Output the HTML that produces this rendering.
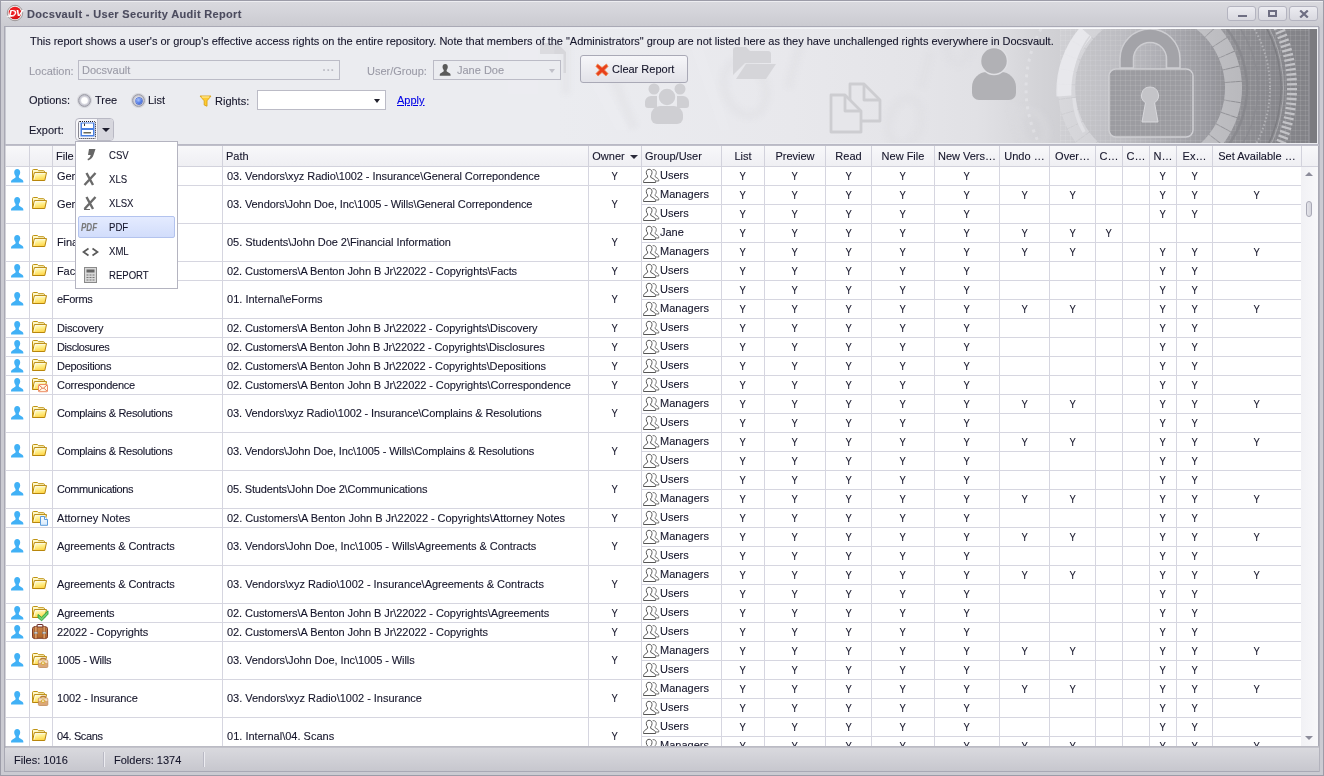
<!DOCTYPE html>
<html lang="en"><head><meta charset="utf-8"><title>Docsvault - User Security Audit Report</title>
<style>
html,body{margin:0;padding:0}
body{width:1324px;height:776px;overflow:hidden;position:relative;background:#d3d3da;font-family:"Liberation Sans",sans-serif;font-size:11px;color:#15152a;-webkit-font-smoothing:antialiased;-webkit-text-stroke-width:0.1px}
div,span,i,a{box-sizing:border-box}
.abs{position:absolute}
#win{position:absolute;left:0;top:0;width:1324px;height:776px;border:1px solid #9c9ca8;background:linear-gradient(#ededf1 0,#ededf1 1px,#d9d9de 1.5px,#d3d3d9 12px,#cbcbd1 25px,#cbcbd2 26px)}
#title{will-change:transform;position:absolute;left:27px;top:8px;font-weight:bold;font-size:11px;color:#4b4b5e;letter-spacing:0.32px;white-space:nowrap;line-height:13px}
.wb{position:absolute;top:6px;width:29px;height:15px;border:1px solid #b4b4c0;border-radius:3px;background:linear-gradient(#ececf1,#d9d9e0)}
#client{position:absolute;left:4px;top:26px;width:1315px;height:746px;border:1px solid #a9a9b4;border-top:2px solid #a9a9b5;background:#ebecf0}
#panel{position:absolute;left:5px;top:27px;width:1313px;height:117px;background:#ebecf0;overflow:hidden}
#grid{position:absolute;left:5px;top:146px;width:1313px;height:600px;background:#fff;overflow:hidden}
.hc{position:absolute;top:0;height:20px;line-height:20px;background:linear-gradient(#f8f8fa,#efeff3);border-right:1px solid #d2d2dc;border-bottom:1px solid #d2d2dc;text-align:center;white-space:nowrap;overflow:hidden;box-sizing:content-box}
.hc.l{text-align:left;padding-left:3px;box-sizing:content-box}
.c{position:absolute;border-right:1px solid #d6d6e0;border-bottom:1px solid #d6d6e0;box-sizing:content-box;white-space:nowrap;overflow:hidden}
.c.ctr{text-align:center}
.c.ctr span{display:inline-block;transform:scaleX(0.86)}
.c.l{padding-left:4px;letter-spacing:-0.1px}
.c.g{padding-left:18px;letter-spacing:0}
.c.g span{position:relative;top:-1px}
.ic{width:18px;height:16px;position:absolute;overflow:visible}
.sortarr{display:inline-block;width:0;height:0;border-left:4px solid transparent;border-right:4px solid transparent;border-top:4px solid #2a2a3a;margin-left:5px;vertical-align:middle}
.dis{color:#9a9aa6}
.inp{border:1px solid #bbbbc6;background:#ebecf0}
.btn{border:1px solid #a9a9b6;border-radius:3px;background:linear-gradient(#f6f6f9,#e2e2e8)}
.radio{width:13px;height:13px;border-radius:50%;border:1px solid #9a9aa4;background:radial-gradient(circle closest-side at 50% 50%,#fff 0,#fff 52%,#d6d6de 72%,#bcbcc6 100%);box-shadow:0 0 0 1px rgba(196,196,204,0.55)}
.radio.on::after{content:"";position:absolute;left:2.500px;top:2.500px;width:6px;height:6px;border-radius:50%;background:radial-gradient(circle at 40% 35%,#a9c4ff,#3f6be0 70%,#2c52c4);box-shadow:0 0 0 0.700px #3a5fc8}
.sep{top:4px;width:2px;height:15px;border-left:1px solid #b9b9c4;border-right:1px solid #ececf1}
.mi{position:absolute;left:1px;width:100px;height:24px;line-height:24px;white-space:nowrap}
.mi b{position:absolute;left:32px;top:0;font-weight:normal;transform:scaleX(0.87);transform-origin:left}
.mi em{position:absolute;left:4px;top:0;font-size:11.500px;font-weight:bold;font-style:italic;color:#777;letter-spacing:0;transform:scaleX(0.70);transform-origin:left}
</style></head><body>
<svg width="0" height="0" style="position:absolute">
<defs>
<linearGradient id="gf" x1="0" y1="0" x2="0.300" y2="1"><stop offset="0" stop-color="#fffce0"/><stop offset="0.450" stop-color="#fff39a"/><stop offset="1" stop-color="#ffd84e"/></linearGradient>
<linearGradient id="gb" x1="0" y1="0" x2="0" y2="1"><stop offset="0" stop-color="#fffbd2"/><stop offset="1" stop-color="#ffe98a"/></linearGradient>
<linearGradient id="gbr" x1="0" y1="0" x2="0" y2="1"><stop offset="0" stop-color="#c98448"/><stop offset="1" stop-color="#b06428"/></linearGradient>
<linearGradient id="gdoc" x1="0" y1="0" x2="0" y2="1"><stop offset="0" stop-color="#f8fcff"/><stop offset="1" stop-color="#d6e9fb"/></linearGradient>
<g id="fold"><path d="M1.500 12.500V2.600Q1.500 1.500 2.600 1.500H6.400L7.600 2.700H12.400Q13.500 2.700 13.500 3.800V4.600" fill="url(#gb)" stroke="#bf9312" stroke-width="1"/><path d="M1.600 12.500L3.400 4.600H15.500L13.800 12.500Z" fill="url(#gf)" stroke="#b8860b" stroke-width="1" stroke-linejoin="round"/><path d="M3 11.500L4.300 5.600H14.300" fill="none" stroke="#fff" stroke-width="0.800" opacity="0.850"/></g>
<symbol id="i-user" viewBox="0 0 16 16"><path d="M8.200 1C10.100 1 11.200 2.400 11.200 4.300C11.200 5.700 10.700 7 9.900 7.900C9.700 8.600 9.800 9.300 10.100 9.800L13.300 11.800C14.100 12.300 14.400 13 14.400 14.600H2C2 13 2.300 12.300 3.100 11.800L6.300 9.800C6.600 9.300 6.700 8.600 6.500 7.900C5.700 7 5.200 5.700 5.200 4.300C5.200 2.400 6.300 1 8.200 1Z" fill="#41b1f6"/></symbol>
<symbol id="i-userg" viewBox="0 0 16 16"><path d="M8.200 1C10.100 1 11.200 2.400 11.200 4.300C11.200 5.700 10.700 7 9.900 7.900C9.700 8.600 9.800 9.300 10.100 9.800L13.300 11.800C14.100 12.300 14.400 13 14.400 14.600H2C2 13 2.300 12.300 3.100 11.800L6.300 9.800C6.600 9.300 6.700 8.600 6.500 7.900C5.700 7 5.200 5.700 5.200 4.300C5.200 2.400 6.300 1 8.200 1Z" fill="#5a5a5a"/></symbol>
<symbol id="i-f" viewBox="0 0 18 16" overflow="visible"><use href="#fold"/></symbol>
<symbol id="i-fm" viewBox="0 0 18 16" overflow="visible"><use href="#fold"/><rect x="7.500" y="7.500" width="9" height="7.200" rx="0.800" fill="#fff8e6" stroke="#ee8a62" stroke-width="1"/><path d="M8 8l4 3.600L16 8M8 14.200l3-3M16 14.200l-3-3" fill="none" stroke="#e0683c" stroke-width="0.900"/></symbol>
<symbol id="i-fd" viewBox="0 0 18 16" overflow="visible"><use href="#fold"/><path d="M9.500 6.500H13.500L16.500 9.500V15.300H9.500Z" fill="url(#gdoc)" stroke="#5b9bdc" stroke-width="1" stroke-linejoin="round"/><path d="M13.500 6.500V9.500H16.500" fill="#fff" stroke="#5b9bdc" stroke-width="1" stroke-linejoin="round"/></symbol>
<symbol id="i-fc" viewBox="0 0 18 16" overflow="visible"><use href="#fold"/><path d="M7 9.500L10.500 12.200L17 5.800V9.200L10.700 15.800L7 12.700Z" fill="#6fd070" stroke="#2aa03a" stroke-width="0.900" stroke-linejoin="round"/></symbol>
<symbol id="i-fb" viewBox="0 0 18 16" overflow="visible"><use href="#fold"/><path d="M9.800 8.300V7.300Q9.800 6.300 10.800 6.300H13.400Q14.400 6.300 14.400 7.300V8.300" fill="none" stroke="#b87840" stroke-width="1.300"/><rect x="7.400" y="8" width="9.400" height="7.500" rx="1" fill="#dba878" stroke="#c08a58" stroke-width="0.800"/><rect x="7.800" y="8.400" width="8.600" height="2.600" fill="#f4dcc4"/><rect x="10.400" y="10" width="3.400" height="2.200" rx="0.800" fill="#fff" stroke="#d4a010" stroke-width="1"/></symbol>
<symbol id="i-b" viewBox="0 0 18 16" overflow="visible"><path d="M6 3V1.800Q6 0.500 7.300 0.500H10.700Q12 0.500 12 1.800V3" fill="none" stroke="#6e2c2c" stroke-width="1.200"/><rect x="1.500" y="3" width="15" height="11.300" rx="1.500" fill="url(#gbr)" stroke="#7a3a2a" stroke-width="1"/><rect x="3.500" y="2.600" width="2.600" height="12.200" fill="#d99a60" stroke="#8a4a30" stroke-width="0.600"/><rect x="12" y="2.600" width="2.600" height="12.200" fill="#d99a60" stroke="#8a4a30" stroke-width="0.600"/><rect x="3.200" y="8" width="3.200" height="1.800" fill="#e8e8e8" stroke="#777" stroke-width="0.500"/><rect x="11.700" y="8" width="3.200" height="1.800" fill="#e8e8e8" stroke="#777" stroke-width="0.500"/></symbol>
<symbol id="i-group" viewBox="0 0 16 16" overflow="visible"><path d="M9.600 1.700C11.900 1.200 13.300 2.600 13.300 4.600C13.300 6 12.800 7 12.200 7.600V8.800L15 10.600C15.600 11 15.800 11.800 15.800 13H12.600" fill="#fff" stroke="#666" stroke-width="0.900"/><path d="M6.100 1.300C8 1.300 9 2.700 9 4.500C9 5.900 8.500 7.100 7.700 7.900V9.300L11.300 11.400C12.200 12 12.600 12.800 12.600 14.500H0.500C0.500 12.800 0.900 12 1.800 11.400L4.600 9.300V7.900C3.800 7.100 3.300 5.900 3.300 4.500C3.300 2.700 4.200 1.300 6.100 1.300Z" fill="#fff" stroke="#555" stroke-width="1"/></symbol>
</defs></svg>
<div id="win"></div>

<svg class="abs" style="left:6px;top:4px;overflow:visible;will-change:transform" width="18" height="18" viewBox="0 0 18 18"><defs><radialGradient id="dvg" cx="0.450" cy="0.350" r="0.750"><stop offset="0" stop-color="#f5262a"/><stop offset="0.700" stop-color="#e0161a"/><stop offset="1" stop-color="#b80e12"/></radialGradient></defs><circle cx="9" cy="9" r="7.700" fill="#f2f0f0" stroke="#8c8484" stroke-width="0.800"/><circle cx="9" cy="9" r="6.300" fill="url(#dvg)"/><text transform="translate(9.400 12) scale(1.200 1)" x="0" y="0" text-anchor="middle" font-family="Liberation Sans, sans-serif" font-size="9" font-weight="bold" font-style="italic" fill="#fff" letter-spacing="-0.800" style="-webkit-text-stroke-width:0">DV</text><path d="M0.800 12.200C3.500 12.600 6.500 12.400 8.500 11.600" stroke="#fff" stroke-width="1" fill="none"/></svg>
<div id="title">Docsvault - User Security Audit Report</div>
<div class="wb" style="left:1227px"><i class="abs" style="left:10px;top:8px;width:9px;height:2px;background:#6e6e82"></i></div>
<div class="wb" style="left:1258px"><i class="abs" style="left:9px;top:3px;width:9px;height:7px;border:2px solid #6e6e82"></i></div>
<div class="wb" style="left:1289px"><svg class="abs" style="left:9px;top:3px" width="10" height="8" viewBox="0 0 10 8"><path d="M1.200 0.500L8.800 7.500M8.800 0.500L1.200 7.500" stroke="#6e6e82" stroke-width="2.200"/></svg></div>
<div id="client"></div>
<div id="panel">
<svg class="abs" style="left:0;top:0" width="1313" height="117" viewBox="5 27 1313 117">
<defs>
<linearGradient id="bg1" x1="5" y1="0" x2="1317" y2="0" gradientUnits="userSpaceOnUse"><stop offset="0" stop-color="#ebecf0"/><stop offset="0.420" stop-color="#ebecf0"/><stop offset="0.600" stop-color="#e8e8ec"/><stop offset="0.700" stop-color="#e4e4e8"/><stop offset="0.740" stop-color="#e1e1e5"/><stop offset="0.765" stop-color="#dbdbdf"/><stop offset="0.785" stop-color="#d4d4d8"/><stop offset="0.815" stop-color="#cdcdd1"/><stop offset="0.850" stop-color="#c4c4c8"/><stop offset="0.880" stop-color="#b4b4b9"/><stop offset="0.910" stop-color="#a2a2a7"/><stop offset="0.940" stop-color="#8f8f94"/><stop offset="0.970" stop-color="#87878c"/><stop offset="1" stop-color="#818186"/></linearGradient>
<pattern id="gridp" width="5" height="5" patternUnits="userSpaceOnUse"><path d="M0 0.500h5M0.500 0v5" stroke="#fff" stroke-opacity="0.090" stroke-width="1"/></pattern>
<clipPath id="bclip"><rect x="5" y="29" width="1312" height="114"/></clipPath>
<linearGradient id="ringl" x1="1058" y1="0" x2="1242" y2="0" gradientUnits="userSpaceOnUse"><stop offset="0" stop-color="#d8d8dc"/><stop offset="0.250" stop-color="#d2d2d6"/><stop offset="0.600" stop-color="#c6c6ca"/><stop offset="1" stop-color="#b9b9bd"/></linearGradient><linearGradient id="mgl" x1="1000" y1="0" x2="1110" y2="0" gradientUnits="userSpaceOnUse"><stop offset="0" stop-color="#fff"/><stop offset="1" stop-color="#000"/></linearGradient><mask id="lmask" maskUnits="userSpaceOnUse" x="5" y="27" width="1313" height="117"><rect x="5" y="27" width="1313" height="117" fill="url(#mgl)"/></mask>
<linearGradient id="mg" x1="1110" y1="0" x2="1240" y2="0" gradientUnits="userSpaceOnUse"><stop offset="0" stop-color="#000"/><stop offset="1" stop-color="#fff"/></linearGradient><mask id="rmask" maskUnits="userSpaceOnUse" x="5" y="27" width="1313" height="117"><rect x="5" y="27" width="1313" height="117" fill="url(#mg)"/></mask>
<filter id="blur1" x="-10%" y="-10%" width="120%" height="120%"><feGaussianBlur stdDeviation="2.500"/></filter>
<linearGradient id="wl" x1="500" y1="0" x2="1100" y2="0" gradientUnits="userSpaceOnUse"><stop offset="0" stop-color="#ebecf0"/><stop offset="1" stop-color="#fafafc"/></linearGradient>
</defs>
<rect x="5" y="27" width="1313" height="117" fill="#ebecf0"/>
<rect x="5" y="28" width="1313" height="1" fill="url(#wl)"/>
<g clip-path="url(#bclip)">
<rect x="5" y="29" width="1312" height="114" fill="url(#bg1)"/>
<!-- faint texture -->
<g fill="none" stroke="#dcdce0" stroke-width="9" opacity="0.320" filter="url(#blur1)">
<ellipse cx="745" cy="88" rx="20" ry="28" transform="rotate(-20 745 88)"/>
<ellipse cx="905" cy="122" rx="16" ry="24" transform="rotate(15 905 122)"/>
<path d="M800 44l-12 44M930 52l-9 36M1012 104l10 36M608 64l26 64M566 44v50"/>
<ellipse cx="1032" cy="128" rx="13" ry="19" transform="rotate(-25 1032 128)"/>
<ellipse cx="958" cy="47" rx="11" ry="16"/>
</g>
<g fill="#d7d7db"><path d="M540 43h17l9 9v21h-2.500V54h-9V45.500H540z"/><rect x="540" y="43" width="15" height="11" opacity="0.800"/></g>
<g fill="#f3f3f6" opacity="0.150"><path d="M508 44h30v50h-30zM590 60l40 70h-14l-38-70zM700 40l30 90h-10l-32-90z"/></g>
<!-- grid overlay on right -->
<rect x="1060" y="29" width="257" height="114" fill="url(#gridp)"/>
<!-- outer rings --><g mask="url(#rmask)">
<circle cx="1150" cy="88" r="142" fill="none" stroke="#c2c2c6" stroke-width="10" stroke-dasharray="2.300 2.600"/>
<circle cx="1150" cy="88" r="131" fill="none" stroke="#7d7d82" stroke-width="1.500"/>
<circle cx="1150" cy="88" r="133.500" fill="none" stroke="#aaaaae" stroke-width="1"/>
<circle cx="1150" cy="88" r="120" fill="none" stroke="#b0b0b4" stroke-width="2" stroke-dasharray="1.500 2.200"/>
<circle cx="1150" cy="88" r="108" fill="none" stroke="#89898e" stroke-width="1.500" opacity="0.700"/>
<circle cx="1150" cy="88" r="97" fill="none" stroke="#86868b" stroke-width="2.500" opacity="0.800"/>
</g><g mask="url(#lmask)"><circle cx="1150" cy="88" r="124" fill="none" stroke="#e6e6ea" stroke-width="3" stroke-dasharray="3 5" opacity="0.800"/></g><!-- light segmented ring --><circle cx="1150" cy="88" r="76" fill="#77777c" opacity="0.080"/>
<circle cx="1150" cy="88" r="83.500" fill="none" stroke="url(#ringl)" stroke-width="17" stroke-dasharray="13 1"/>
<path d="M1086 32a90 90 0 0 0 -22 64" fill="none" stroke="#eeeef1" stroke-width="15" opacity="0.750"/>
<path d="M1074 98a78 78 0 0 0 10 34" fill="none" stroke="#e0e0e4" stroke-width="3.500"/>
<path d="M1090 36a80 80 0 0 0 -16 44" fill="none" stroke="#d6d6da" stroke-width="1.500"/>
<!-- lock -->
<path d="M1120 68V59a30 30 0 0 1 60 0v9h-13.500v-9a16.500 16.500 0 0 0 -33 0v9z" fill="#a3a3a8" stroke="#cdcdd1" stroke-width="1.500"/>
<rect x="1109" y="69" width="84" height="68" rx="7" fill="#9c9ca1" stroke="#cfcfd3" stroke-width="1.500"/>
<rect x="1110" y="70" width="82" height="66" rx="6" fill="url(#gridp)"/>
<path d="M1150 87a8.500 8.500 0 0 1 4.500 15.700l3.500 19.300h-16l3.500-19.300a8.500 8.500 0 0 1 4.500-15.700z" fill="#c4c4c8" stroke="#d8d8dc" stroke-width="1"/>
<!-- right strip -->
<rect x="1309" y="29" width="8" height="114" fill="#7b7b80"/>
<rect x="1308.500" y="29" width="1" height="114" fill="#a0a0a5"/>
<!-- silhouettes -->
<g fill="#b1b1b5">
<path d="M972 93V87a15 15 0 0 1 15-15h14a15 15 0 0 1 15 15v6a7 7 0 0 1-7 7h-30a7 7 0 0 1-7-7z"/>
</g>
<circle cx="994" cy="61" r="13.500" fill="#b1b1b5" stroke="#e0e0e4" stroke-width="1.500"/>
<g fill="none" stroke="#cdcdd1" stroke-width="2.800" stroke-linejoin="round">
<path d="M850 84h14l16 16v21h-30z"/><path d="M864 84v16h16"/>
<path d="M831 95h14l16 16v21h-30z" fill="#e6e6ea"/><path d="M845 95v16h16"/>
</g>
<g fill="#d5d5d9">
<path d="M733 75V50a3 3 0 0 1 3-3h10l4 4h18a3 3 0 0 1 3 3v9h-26z"/><path d="M736 79l10-15h30l-10 15z"/>
</g>
<g fill="#cfcfd3">
<circle cx="654" cy="89" r="5.500"/><circle cx="680" cy="89" r="5.500"/>
<path d="M645 105v-3a6 6 0 0 1 6-6h6v12h-9a3 3 0 0 1-3-3zM689 105v-3a6 6 0 0 0-6-6h-6v12h9a3 3 0 0 0 3-3z"/>
<circle cx="667" cy="97" r="9" stroke="#ebecf0" stroke-width="1.500"/>
<path d="M651 118v-3a9 9 0 0 1 9-9h14a9 9 0 0 1 9 9v3a6 6 0 0 1-6 6h-20a6 6 0 0 1-6-6z"/>
</g>
</g>

</svg>

<div class="abs" style="left:25px;top:8px;white-space:nowrap;letter-spacing:-0.025px" id="desc">This report shows a user's or group's effective access rights on the entire repository. Note that members of the "Administrators" group are not listed here as they have unchallenged rights everywhere in Docsvault.</div>
<span class="abs dis" style="left:24px;top:38px">Location:</span>
<div class="abs inp dis" style="left:73px;top:33px;width:262px;height:20px"><span class="abs" style="left:3px;top:3px">Docsvault</span><span class="abs" style="right:4px;top:3px;letter-spacing:0.500px;font-weight:bold;color:#bcbcc4">&middot;&middot;&middot;</span></div>
<span class="abs dis" style="left:362px;top:38px">User/Group:</span>
<div class="abs inp dis" style="left:428px;top:33px;width:128px;height:20px"><svg class="abs" style="left:4px;top:2px" width="14" height="14" viewBox="0 0 16 16"><use href="#i-userg"/></svg><span class="abs" style="left:23px;top:3px">Jane Doe</span><i class="abs" style="right:5px;top:8px;border-left:3.500px solid transparent;border-right:3.500px solid transparent;border-top:4px solid #c0c0c8"></i></div>
<div class="abs btn" style="left:575px;top:28px;width:108px;height:28px"><svg class="abs" style="left:14px;top:7px" width="14" height="14" viewBox="0 0 14 14"><path d="M2.500 1L7 4.500 11.500 1 13 3.500 9.500 7 13 10.500 11 13 7 9.500 3 13 1 10.500 4.500 7 1 3.500z" fill="#e8401c" stroke="#f08a50" stroke-width="0.800"/></svg><span class="abs" style="left:31px;top:7px">Clear Report</span></div>
<span class="abs" style="left:24px;top:67px">Options:</span>
<i class="abs radio" style="left:73px;top:67px"></i><span class="abs" style="left:90px;top:67px">Tree</span>
<i class="abs radio on" style="left:127px;top:67px"></i><span class="abs" style="left:143px;top:67px">List</span>
<svg class="abs" style="left:194px;top:68px" width="13" height="12" viewBox="0 0 13 12"><path d="M1 1h11L8 5.800v5.400l-2.800-1.200V5.800z" fill="#ffcb2e" stroke="#d8a21a" stroke-width="0.900" stroke-linejoin="round"/><path d="M2.800 2h7.400" stroke="#fff2b0" stroke-width="1"/></svg>
<span class="abs" style="left:210px;top:68px">Rights:</span>
<div class="abs inp" style="left:252px;top:63px;width:129px;height:20px;background:#fff"><i class="abs" style="right:5px;top:8px;border-left:3.500px solid transparent;border-right:3.500px solid transparent;border-top:4px solid #20202c"></i></div>
<a class="abs" style="left:392px;top:67px;color:#0000e6;text-decoration:underline">Apply</a>
<span class="abs" style="left:24px;top:97px">Export:</span>
<div class="abs" style="left:70px;top:91px;width:39px;height:23px;border:1px solid #b9b9c4;border-radius:4px;background:#f7f7fa;overflow:hidden"><i class="abs" style="left:21px;top:0;width:17px;height:21px;background:#d7d7de;border-left:1px solid #c4c4ce"></i><i class="abs" style="left:2px;top:2px;width:18px;height:18px;border:1px dotted #1a1a28;border-radius:2px"></i><svg class="abs" style="left:4px;top:3px" width="15" height="15" viewBox="0 0 15 15"><rect x="0.500" y="0.500" width="14" height="14" fill="#4a80e2"/><rect x="2" y="1.500" width="11" height="4.500" fill="#fff"/><rect x="2" y="8" width="11" height="5" fill="#fff"/><rect x="3.500" y="10" width="7.500" height="1.500" fill="#6a6a5a"/><rect x="4" y="1.500" width="1" height="2.500" fill="#333"/></svg><i class="abs" style="left:26px;top:9px;border-left:4px solid transparent;border-right:4px solid transparent;border-top:4px solid #1c1c2c"></i></div>
</div>

<div id="grid">
<div class="hc" style="left:1px;width:23px"><span></span></div>
<div class="hc" style="left:25px;width:22px"><span></span></div>
<div class="hc l" style="left:48px;width:166px"><span>File Name</span></div>
<div class="hc l" style="left:218px;width:362px"><span>Path</span></div>
<div class="hc" style="left:584px;width:52px"><span>Owner</span><i class="sortarr"></i></div>
<div class="hc l" style="left:637px;width:76px"><span>Group/User</span></div>
<div class="hc" style="left:717px;width:42px"><span>List</span></div>
<div class="hc" style="left:760px;width:60px"><span>Preview</span></div>
<div class="hc" style="left:821px;width:45px"><span>Read</span></div>
<div class="hc" style="left:867px;width:62px"><span>New File</span></div>
<div class="hc" style="left:930px;width:64px"><span>New Vers…</span></div>
<div class="hc" style="left:995px;width:49px"><span>Undo …</span></div>
<div class="hc" style="left:1045px;width:45px"><span>Over…</span></div>
<div class="hc" style="left:1091px;width:26px"><span>C…</span></div>
<div class="hc" style="left:1118px;width:26px"><span>C…</span></div>
<div class="hc" style="left:1145px;width:26px"><span>N…</span></div>
<div class="hc" style="left:1172px;width:35px"><span>Ex…</span></div>
<div class="hc" style="left:1208px;width:88px"><span>Set Available …</span></div>
<div class="hc" style="left:1297px;width:16px;border-right:none"></div>
<div class="c ctr" style="left:1px;top:21px;width:23px;height:18px;line-height:18px"><svg class="ic" style="left:3px;top:1px;width:16px"><use href="#i-user"/></svg></div>
<div class="c ctr" style="left:25px;top:21px;width:22px;height:18px;line-height:18px"><svg class="ic" style="left:1px;top:1px"><use href="#i-f"/></svg></div>
<div class="c l" style="left:48px;top:21px;width:165px;height:18px;line-height:18px"><span>General Correpondence</span></div>
<div class="c l" style="left:218px;top:21px;width:361px;height:18px;line-height:18px"><span style="letter-spacing:-0.066px">03. Vendors\xyz Radio\1002 - Insurance\General Correpondence</span></div>
<div class="c ctr" style="left:584px;top:21px;width:52px;height:18px;line-height:18px"><span>Y</span></div>
<div class="c l g" style="left:637px;top:21px;width:61px;height:18px;line-height:18px"><svg class="ic" style="left:1px;top:1px;width:16px"><use href="#i-group"/></svg><span>Users</span></div>
<div class="c ctr" style="left:717px;top:21px;width:42px;height:18px;line-height:18px"><span>Y</span></div>
<div class="c ctr" style="left:760px;top:21px;width:60px;height:18px;line-height:18px"><span>Y</span></div>
<div class="c ctr" style="left:821px;top:21px;width:45px;height:18px;line-height:18px"><span>Y</span></div>
<div class="c ctr" style="left:867px;top:21px;width:62px;height:18px;line-height:18px"><span>Y</span></div>
<div class="c ctr" style="left:930px;top:21px;width:64px;height:18px;line-height:18px"><span>Y</span></div>
<div class="c ctr" style="left:995px;top:21px;width:49px;height:18px;line-height:18px"></div>
<div class="c ctr" style="left:1045px;top:21px;width:45px;height:18px;line-height:18px"></div>
<div class="c ctr" style="left:1091px;top:21px;width:26px;height:18px;line-height:18px"></div>
<div class="c ctr" style="left:1118px;top:21px;width:26px;height:18px;line-height:18px"></div>
<div class="c ctr" style="left:1145px;top:21px;width:26px;height:18px;line-height:18px"><span>Y</span></div>
<div class="c ctr" style="left:1172px;top:21px;width:35px;height:18px;line-height:18px"><span>Y</span></div>
<div class="c ctr" style="left:1208px;top:21px;width:88px;height:18px;line-height:18px"></div>
<div class="c ctr" style="left:1px;top:40px;width:23px;height:37px;line-height:37px"><svg class="ic" style="left:3px;top:10px;width:16px"><use href="#i-user"/></svg></div>
<div class="c ctr" style="left:25px;top:40px;width:22px;height:37px;line-height:37px"><svg class="ic" style="left:1px;top:10px"><use href="#i-f"/></svg></div>
<div class="c l" style="left:48px;top:40px;width:165px;height:37px;line-height:37px"><span>General Correpondence</span></div>
<div class="c l" style="left:218px;top:40px;width:361px;height:37px;line-height:37px"><span style="letter-spacing:-0.098px">03. Vendors\John Doe, Inc\1005 - Wills\General Correpondence</span></div>
<div class="c ctr" style="left:584px;top:40px;width:52px;height:37px;line-height:37px"><span>Y</span></div>
<div class="c l g" style="left:637px;top:40px;width:61px;height:18px;line-height:18px"><svg class="ic" style="left:1px;top:1px;width:16px"><use href="#i-group"/></svg><span>Managers</span></div>
<div class="c ctr" style="left:717px;top:40px;width:42px;height:18px;line-height:18px"><span>Y</span></div>
<div class="c ctr" style="left:760px;top:40px;width:60px;height:18px;line-height:18px"><span>Y</span></div>
<div class="c ctr" style="left:821px;top:40px;width:45px;height:18px;line-height:18px"><span>Y</span></div>
<div class="c ctr" style="left:867px;top:40px;width:62px;height:18px;line-height:18px"><span>Y</span></div>
<div class="c ctr" style="left:930px;top:40px;width:64px;height:18px;line-height:18px"><span>Y</span></div>
<div class="c ctr" style="left:995px;top:40px;width:49px;height:18px;line-height:18px"><span>Y</span></div>
<div class="c ctr" style="left:1045px;top:40px;width:45px;height:18px;line-height:18px"><span>Y</span></div>
<div class="c ctr" style="left:1091px;top:40px;width:26px;height:18px;line-height:18px"></div>
<div class="c ctr" style="left:1118px;top:40px;width:26px;height:18px;line-height:18px"></div>
<div class="c ctr" style="left:1145px;top:40px;width:26px;height:18px;line-height:18px"><span>Y</span></div>
<div class="c ctr" style="left:1172px;top:40px;width:35px;height:18px;line-height:18px"><span>Y</span></div>
<div class="c ctr" style="left:1208px;top:40px;width:88px;height:18px;line-height:18px"><span>Y</span></div>
<div class="c l g" style="left:637px;top:59px;width:61px;height:18px;line-height:18px"><svg class="ic" style="left:1px;top:1px;width:16px"><use href="#i-group"/></svg><span>Users</span></div>
<div class="c ctr" style="left:717px;top:59px;width:42px;height:18px;line-height:18px"><span>Y</span></div>
<div class="c ctr" style="left:760px;top:59px;width:60px;height:18px;line-height:18px"><span>Y</span></div>
<div class="c ctr" style="left:821px;top:59px;width:45px;height:18px;line-height:18px"><span>Y</span></div>
<div class="c ctr" style="left:867px;top:59px;width:62px;height:18px;line-height:18px"><span>Y</span></div>
<div class="c ctr" style="left:930px;top:59px;width:64px;height:18px;line-height:18px"><span>Y</span></div>
<div class="c ctr" style="left:995px;top:59px;width:49px;height:18px;line-height:18px"></div>
<div class="c ctr" style="left:1045px;top:59px;width:45px;height:18px;line-height:18px"></div>
<div class="c ctr" style="left:1091px;top:59px;width:26px;height:18px;line-height:18px"></div>
<div class="c ctr" style="left:1118px;top:59px;width:26px;height:18px;line-height:18px"></div>
<div class="c ctr" style="left:1145px;top:59px;width:26px;height:18px;line-height:18px"><span>Y</span></div>
<div class="c ctr" style="left:1172px;top:59px;width:35px;height:18px;line-height:18px"><span>Y</span></div>
<div class="c ctr" style="left:1208px;top:59px;width:88px;height:18px;line-height:18px"></div>
<div class="c ctr" style="left:1px;top:78px;width:23px;height:37px;line-height:37px"><svg class="ic" style="left:3px;top:10px;width:16px"><use href="#i-user"/></svg></div>
<div class="c ctr" style="left:25px;top:78px;width:22px;height:37px;line-height:37px"><svg class="ic" style="left:1px;top:10px"><use href="#i-f"/></svg></div>
<div class="c l" style="left:48px;top:78px;width:165px;height:37px;line-height:37px"><span>Financial Information</span></div>
<div class="c l" style="left:218px;top:78px;width:361px;height:37px;line-height:37px"><span style="letter-spacing:-0.052px">05. Students\John Doe 2\Financial Information</span></div>
<div class="c ctr" style="left:584px;top:78px;width:52px;height:37px;line-height:37px"><span>Y</span></div>
<div class="c l g" style="left:637px;top:78px;width:61px;height:18px;line-height:18px"><svg class="ic" style="left:1px;top:1px;width:16px"><use href="#i-group"/></svg><span>Jane</span></div>
<div class="c ctr" style="left:717px;top:78px;width:42px;height:18px;line-height:18px"><span>Y</span></div>
<div class="c ctr" style="left:760px;top:78px;width:60px;height:18px;line-height:18px"><span>Y</span></div>
<div class="c ctr" style="left:821px;top:78px;width:45px;height:18px;line-height:18px"><span>Y</span></div>
<div class="c ctr" style="left:867px;top:78px;width:62px;height:18px;line-height:18px"><span>Y</span></div>
<div class="c ctr" style="left:930px;top:78px;width:64px;height:18px;line-height:18px"><span>Y</span></div>
<div class="c ctr" style="left:995px;top:78px;width:49px;height:18px;line-height:18px"><span>Y</span></div>
<div class="c ctr" style="left:1045px;top:78px;width:45px;height:18px;line-height:18px"><span>Y</span></div>
<div class="c ctr" style="left:1091px;top:78px;width:26px;height:18px;line-height:18px"><span>Y</span></div>
<div class="c ctr" style="left:1118px;top:78px;width:26px;height:18px;line-height:18px"></div>
<div class="c ctr" style="left:1145px;top:78px;width:26px;height:18px;line-height:18px"></div>
<div class="c ctr" style="left:1172px;top:78px;width:35px;height:18px;line-height:18px"></div>
<div class="c ctr" style="left:1208px;top:78px;width:88px;height:18px;line-height:18px"></div>
<div class="c l g" style="left:637px;top:97px;width:61px;height:18px;line-height:18px"><svg class="ic" style="left:1px;top:1px;width:16px"><use href="#i-group"/></svg><span>Managers</span></div>
<div class="c ctr" style="left:717px;top:97px;width:42px;height:18px;line-height:18px"><span>Y</span></div>
<div class="c ctr" style="left:760px;top:97px;width:60px;height:18px;line-height:18px"><span>Y</span></div>
<div class="c ctr" style="left:821px;top:97px;width:45px;height:18px;line-height:18px"><span>Y</span></div>
<div class="c ctr" style="left:867px;top:97px;width:62px;height:18px;line-height:18px"><span>Y</span></div>
<div class="c ctr" style="left:930px;top:97px;width:64px;height:18px;line-height:18px"><span>Y</span></div>
<div class="c ctr" style="left:995px;top:97px;width:49px;height:18px;line-height:18px"><span>Y</span></div>
<div class="c ctr" style="left:1045px;top:97px;width:45px;height:18px;line-height:18px"><span>Y</span></div>
<div class="c ctr" style="left:1091px;top:97px;width:26px;height:18px;line-height:18px"></div>
<div class="c ctr" style="left:1118px;top:97px;width:26px;height:18px;line-height:18px"></div>
<div class="c ctr" style="left:1145px;top:97px;width:26px;height:18px;line-height:18px"><span>Y</span></div>
<div class="c ctr" style="left:1172px;top:97px;width:35px;height:18px;line-height:18px"><span>Y</span></div>
<div class="c ctr" style="left:1208px;top:97px;width:88px;height:18px;line-height:18px"><span>Y</span></div>
<div class="c ctr" style="left:1px;top:116px;width:23px;height:18px;line-height:18px"><svg class="ic" style="left:3px;top:1px;width:16px"><use href="#i-user"/></svg></div>
<div class="c ctr" style="left:25px;top:116px;width:22px;height:18px;line-height:18px"><svg class="ic" style="left:1px;top:1px"><use href="#i-f"/></svg></div>
<div class="c l" style="left:48px;top:116px;width:165px;height:18px;line-height:18px"><span>Facts</span></div>
<div class="c l" style="left:218px;top:116px;width:361px;height:18px;line-height:18px"><span style="letter-spacing:-0.082px">02. Customers\A Benton John B Jr\22022 - Copyrights\Facts</span></div>
<div class="c ctr" style="left:584px;top:116px;width:52px;height:18px;line-height:18px"><span>Y</span></div>
<div class="c l g" style="left:637px;top:116px;width:61px;height:18px;line-height:18px"><svg class="ic" style="left:1px;top:1px;width:16px"><use href="#i-group"/></svg><span>Users</span></div>
<div class="c ctr" style="left:717px;top:116px;width:42px;height:18px;line-height:18px"><span>Y</span></div>
<div class="c ctr" style="left:760px;top:116px;width:60px;height:18px;line-height:18px"><span>Y</span></div>
<div class="c ctr" style="left:821px;top:116px;width:45px;height:18px;line-height:18px"><span>Y</span></div>
<div class="c ctr" style="left:867px;top:116px;width:62px;height:18px;line-height:18px"><span>Y</span></div>
<div class="c ctr" style="left:930px;top:116px;width:64px;height:18px;line-height:18px"><span>Y</span></div>
<div class="c ctr" style="left:995px;top:116px;width:49px;height:18px;line-height:18px"></div>
<div class="c ctr" style="left:1045px;top:116px;width:45px;height:18px;line-height:18px"></div>
<div class="c ctr" style="left:1091px;top:116px;width:26px;height:18px;line-height:18px"></div>
<div class="c ctr" style="left:1118px;top:116px;width:26px;height:18px;line-height:18px"></div>
<div class="c ctr" style="left:1145px;top:116px;width:26px;height:18px;line-height:18px"><span>Y</span></div>
<div class="c ctr" style="left:1172px;top:116px;width:35px;height:18px;line-height:18px"><span>Y</span></div>
<div class="c ctr" style="left:1208px;top:116px;width:88px;height:18px;line-height:18px"></div>
<div class="c ctr" style="left:1px;top:135px;width:23px;height:37px;line-height:37px"><svg class="ic" style="left:3px;top:10px;width:16px"><use href="#i-user"/></svg></div>
<div class="c ctr" style="left:25px;top:135px;width:22px;height:37px;line-height:37px"><svg class="ic" style="left:1px;top:10px"><use href="#i-f"/></svg></div>
<div class="c l" style="left:48px;top:135px;width:165px;height:37px;line-height:37px"><span style="letter-spacing:-0.300px">eForms</span></div>
<div class="c l" style="left:218px;top:135px;width:361px;height:37px;line-height:37px"><span style="letter-spacing:0.011px">01. Internal\eForms</span></div>
<div class="c ctr" style="left:584px;top:135px;width:52px;height:37px;line-height:37px"><span>Y</span></div>
<div class="c l g" style="left:637px;top:135px;width:61px;height:18px;line-height:18px"><svg class="ic" style="left:1px;top:1px;width:16px"><use href="#i-group"/></svg><span>Users</span></div>
<div class="c ctr" style="left:717px;top:135px;width:42px;height:18px;line-height:18px"><span>Y</span></div>
<div class="c ctr" style="left:760px;top:135px;width:60px;height:18px;line-height:18px"><span>Y</span></div>
<div class="c ctr" style="left:821px;top:135px;width:45px;height:18px;line-height:18px"><span>Y</span></div>
<div class="c ctr" style="left:867px;top:135px;width:62px;height:18px;line-height:18px"><span>Y</span></div>
<div class="c ctr" style="left:930px;top:135px;width:64px;height:18px;line-height:18px"><span>Y</span></div>
<div class="c ctr" style="left:995px;top:135px;width:49px;height:18px;line-height:18px"></div>
<div class="c ctr" style="left:1045px;top:135px;width:45px;height:18px;line-height:18px"></div>
<div class="c ctr" style="left:1091px;top:135px;width:26px;height:18px;line-height:18px"></div>
<div class="c ctr" style="left:1118px;top:135px;width:26px;height:18px;line-height:18px"></div>
<div class="c ctr" style="left:1145px;top:135px;width:26px;height:18px;line-height:18px"><span>Y</span></div>
<div class="c ctr" style="left:1172px;top:135px;width:35px;height:18px;line-height:18px"><span>Y</span></div>
<div class="c ctr" style="left:1208px;top:135px;width:88px;height:18px;line-height:18px"></div>
<div class="c l g" style="left:637px;top:154px;width:61px;height:18px;line-height:18px"><svg class="ic" style="left:1px;top:1px;width:16px"><use href="#i-group"/></svg><span>Managers</span></div>
<div class="c ctr" style="left:717px;top:154px;width:42px;height:18px;line-height:18px"><span>Y</span></div>
<div class="c ctr" style="left:760px;top:154px;width:60px;height:18px;line-height:18px"><span>Y</span></div>
<div class="c ctr" style="left:821px;top:154px;width:45px;height:18px;line-height:18px"><span>Y</span></div>
<div class="c ctr" style="left:867px;top:154px;width:62px;height:18px;line-height:18px"><span>Y</span></div>
<div class="c ctr" style="left:930px;top:154px;width:64px;height:18px;line-height:18px"><span>Y</span></div>
<div class="c ctr" style="left:995px;top:154px;width:49px;height:18px;line-height:18px"><span>Y</span></div>
<div class="c ctr" style="left:1045px;top:154px;width:45px;height:18px;line-height:18px"><span>Y</span></div>
<div class="c ctr" style="left:1091px;top:154px;width:26px;height:18px;line-height:18px"></div>
<div class="c ctr" style="left:1118px;top:154px;width:26px;height:18px;line-height:18px"></div>
<div class="c ctr" style="left:1145px;top:154px;width:26px;height:18px;line-height:18px"><span>Y</span></div>
<div class="c ctr" style="left:1172px;top:154px;width:35px;height:18px;line-height:18px"><span>Y</span></div>
<div class="c ctr" style="left:1208px;top:154px;width:88px;height:18px;line-height:18px"><span>Y</span></div>
<div class="c ctr" style="left:1px;top:173px;width:23px;height:18px;line-height:18px"><svg class="ic" style="left:3px;top:1px;width:16px"><use href="#i-user"/></svg></div>
<div class="c ctr" style="left:25px;top:173px;width:22px;height:18px;line-height:18px"><svg class="ic" style="left:1px;top:1px"><use href="#i-f"/></svg></div>
<div class="c l" style="left:48px;top:173px;width:165px;height:18px;line-height:18px"><span style="letter-spacing:-0.238px">Discovery</span></div>
<div class="c l" style="left:218px;top:173px;width:361px;height:18px;line-height:18px"><span style="letter-spacing:-0.092px">02. Customers\A Benton John B Jr\22022 - Copyrights\Discovery</span></div>
<div class="c ctr" style="left:584px;top:173px;width:52px;height:18px;line-height:18px"><span>Y</span></div>
<div class="c l g" style="left:637px;top:173px;width:61px;height:18px;line-height:18px"><svg class="ic" style="left:1px;top:1px;width:16px"><use href="#i-group"/></svg><span>Users</span></div>
<div class="c ctr" style="left:717px;top:173px;width:42px;height:18px;line-height:18px"><span>Y</span></div>
<div class="c ctr" style="left:760px;top:173px;width:60px;height:18px;line-height:18px"><span>Y</span></div>
<div class="c ctr" style="left:821px;top:173px;width:45px;height:18px;line-height:18px"><span>Y</span></div>
<div class="c ctr" style="left:867px;top:173px;width:62px;height:18px;line-height:18px"><span>Y</span></div>
<div class="c ctr" style="left:930px;top:173px;width:64px;height:18px;line-height:18px"><span>Y</span></div>
<div class="c ctr" style="left:995px;top:173px;width:49px;height:18px;line-height:18px"></div>
<div class="c ctr" style="left:1045px;top:173px;width:45px;height:18px;line-height:18px"></div>
<div class="c ctr" style="left:1091px;top:173px;width:26px;height:18px;line-height:18px"></div>
<div class="c ctr" style="left:1118px;top:173px;width:26px;height:18px;line-height:18px"></div>
<div class="c ctr" style="left:1145px;top:173px;width:26px;height:18px;line-height:18px"><span>Y</span></div>
<div class="c ctr" style="left:1172px;top:173px;width:35px;height:18px;line-height:18px"><span>Y</span></div>
<div class="c ctr" style="left:1208px;top:173px;width:88px;height:18px;line-height:18px"></div>
<div class="c ctr" style="left:1px;top:192px;width:23px;height:18px;line-height:18px"><svg class="ic" style="left:3px;top:1px;width:16px"><use href="#i-user"/></svg></div>
<div class="c ctr" style="left:25px;top:192px;width:22px;height:18px;line-height:18px"><svg class="ic" style="left:1px;top:1px"><use href="#i-f"/></svg></div>
<div class="c l" style="left:48px;top:192px;width:165px;height:18px;line-height:18px"><span style="letter-spacing:-0.410px">Disclosures</span></div>
<div class="c l" style="left:218px;top:192px;width:361px;height:18px;line-height:18px"><span style="letter-spacing:-0.113px">02. Customers\A Benton John B Jr\22022 - Copyrights\Disclosures</span></div>
<div class="c ctr" style="left:584px;top:192px;width:52px;height:18px;line-height:18px"><span>Y</span></div>
<div class="c l g" style="left:637px;top:192px;width:61px;height:18px;line-height:18px"><svg class="ic" style="left:1px;top:1px;width:16px"><use href="#i-group"/></svg><span>Users</span></div>
<div class="c ctr" style="left:717px;top:192px;width:42px;height:18px;line-height:18px"><span>Y</span></div>
<div class="c ctr" style="left:760px;top:192px;width:60px;height:18px;line-height:18px"><span>Y</span></div>
<div class="c ctr" style="left:821px;top:192px;width:45px;height:18px;line-height:18px"><span>Y</span></div>
<div class="c ctr" style="left:867px;top:192px;width:62px;height:18px;line-height:18px"><span>Y</span></div>
<div class="c ctr" style="left:930px;top:192px;width:64px;height:18px;line-height:18px"><span>Y</span></div>
<div class="c ctr" style="left:995px;top:192px;width:49px;height:18px;line-height:18px"></div>
<div class="c ctr" style="left:1045px;top:192px;width:45px;height:18px;line-height:18px"></div>
<div class="c ctr" style="left:1091px;top:192px;width:26px;height:18px;line-height:18px"></div>
<div class="c ctr" style="left:1118px;top:192px;width:26px;height:18px;line-height:18px"></div>
<div class="c ctr" style="left:1145px;top:192px;width:26px;height:18px;line-height:18px"><span>Y</span></div>
<div class="c ctr" style="left:1172px;top:192px;width:35px;height:18px;line-height:18px"><span>Y</span></div>
<div class="c ctr" style="left:1208px;top:192px;width:88px;height:18px;line-height:18px"></div>
<div class="c ctr" style="left:1px;top:211px;width:23px;height:18px;line-height:18px"><svg class="ic" style="left:3px;top:1px;width:16px"><use href="#i-user"/></svg></div>
<div class="c ctr" style="left:25px;top:211px;width:22px;height:18px;line-height:18px"><svg class="ic" style="left:1px;top:1px"><use href="#i-f"/></svg></div>
<div class="c l" style="left:48px;top:211px;width:165px;height:18px;line-height:18px"><span style="letter-spacing:-0.310px">Depositions</span></div>
<div class="c l" style="left:218px;top:211px;width:361px;height:18px;line-height:18px"><span style="letter-spacing:-0.100px">02. Customers\A Benton John B Jr\22022 - Copyrights\Depositions</span></div>
<div class="c ctr" style="left:584px;top:211px;width:52px;height:18px;line-height:18px"><span>Y</span></div>
<div class="c l g" style="left:637px;top:211px;width:61px;height:18px;line-height:18px"><svg class="ic" style="left:1px;top:1px;width:16px"><use href="#i-group"/></svg><span>Users</span></div>
<div class="c ctr" style="left:717px;top:211px;width:42px;height:18px;line-height:18px"><span>Y</span></div>
<div class="c ctr" style="left:760px;top:211px;width:60px;height:18px;line-height:18px"><span>Y</span></div>
<div class="c ctr" style="left:821px;top:211px;width:45px;height:18px;line-height:18px"><span>Y</span></div>
<div class="c ctr" style="left:867px;top:211px;width:62px;height:18px;line-height:18px"><span>Y</span></div>
<div class="c ctr" style="left:930px;top:211px;width:64px;height:18px;line-height:18px"><span>Y</span></div>
<div class="c ctr" style="left:995px;top:211px;width:49px;height:18px;line-height:18px"></div>
<div class="c ctr" style="left:1045px;top:211px;width:45px;height:18px;line-height:18px"></div>
<div class="c ctr" style="left:1091px;top:211px;width:26px;height:18px;line-height:18px"></div>
<div class="c ctr" style="left:1118px;top:211px;width:26px;height:18px;line-height:18px"></div>
<div class="c ctr" style="left:1145px;top:211px;width:26px;height:18px;line-height:18px"><span>Y</span></div>
<div class="c ctr" style="left:1172px;top:211px;width:35px;height:18px;line-height:18px"><span>Y</span></div>
<div class="c ctr" style="left:1208px;top:211px;width:88px;height:18px;line-height:18px"></div>
<div class="c ctr" style="left:1px;top:230px;width:23px;height:18px;line-height:18px"><svg class="ic" style="left:3px;top:1px;width:16px"><use href="#i-user"/></svg></div>
<div class="c ctr" style="left:25px;top:230px;width:22px;height:18px;line-height:18px"><svg class="ic" style="left:1px;top:1px"><use href="#i-fm"/></svg></div>
<div class="c l" style="left:48px;top:230px;width:165px;height:18px;line-height:18px"><span style="letter-spacing:-0.246px">Correspondence</span></div>
<div class="c l" style="left:218px;top:230px;width:361px;height:18px;line-height:18px"><span style="letter-spacing:-0.083px">02. Customers\A Benton John B Jr\22022 - Copyrights\Correspondence</span></div>
<div class="c ctr" style="left:584px;top:230px;width:52px;height:18px;line-height:18px"><span>Y</span></div>
<div class="c l g" style="left:637px;top:230px;width:61px;height:18px;line-height:18px"><svg class="ic" style="left:1px;top:1px;width:16px"><use href="#i-group"/></svg><span>Users</span></div>
<div class="c ctr" style="left:717px;top:230px;width:42px;height:18px;line-height:18px"><span>Y</span></div>
<div class="c ctr" style="left:760px;top:230px;width:60px;height:18px;line-height:18px"><span>Y</span></div>
<div class="c ctr" style="left:821px;top:230px;width:45px;height:18px;line-height:18px"><span>Y</span></div>
<div class="c ctr" style="left:867px;top:230px;width:62px;height:18px;line-height:18px"><span>Y</span></div>
<div class="c ctr" style="left:930px;top:230px;width:64px;height:18px;line-height:18px"><span>Y</span></div>
<div class="c ctr" style="left:995px;top:230px;width:49px;height:18px;line-height:18px"></div>
<div class="c ctr" style="left:1045px;top:230px;width:45px;height:18px;line-height:18px"></div>
<div class="c ctr" style="left:1091px;top:230px;width:26px;height:18px;line-height:18px"></div>
<div class="c ctr" style="left:1118px;top:230px;width:26px;height:18px;line-height:18px"></div>
<div class="c ctr" style="left:1145px;top:230px;width:26px;height:18px;line-height:18px"><span>Y</span></div>
<div class="c ctr" style="left:1172px;top:230px;width:35px;height:18px;line-height:18px"><span>Y</span></div>
<div class="c ctr" style="left:1208px;top:230px;width:88px;height:18px;line-height:18px"></div>
<div class="c ctr" style="left:1px;top:249px;width:23px;height:37px;line-height:37px"><svg class="ic" style="left:3px;top:10px;width:16px"><use href="#i-user"/></svg></div>
<div class="c ctr" style="left:25px;top:249px;width:22px;height:37px;line-height:37px"><svg class="ic" style="left:1px;top:10px"><use href="#i-f"/></svg></div>
<div class="c l" style="left:48px;top:249px;width:165px;height:37px;line-height:37px"><span style="letter-spacing:-0.327px">Complains &amp; Resolutions</span></div>
<div class="c l" style="left:218px;top:249px;width:361px;height:37px;line-height:37px"><span style="letter-spacing:-0.113px">03. Vendors\xyz Radio\1002 - Insurance\Complains &amp; Resolutions</span></div>
<div class="c ctr" style="left:584px;top:249px;width:52px;height:37px;line-height:37px"><span>Y</span></div>
<div class="c l g" style="left:637px;top:249px;width:61px;height:18px;line-height:18px"><svg class="ic" style="left:1px;top:1px;width:16px"><use href="#i-group"/></svg><span>Managers</span></div>
<div class="c ctr" style="left:717px;top:249px;width:42px;height:18px;line-height:18px"><span>Y</span></div>
<div class="c ctr" style="left:760px;top:249px;width:60px;height:18px;line-height:18px"><span>Y</span></div>
<div class="c ctr" style="left:821px;top:249px;width:45px;height:18px;line-height:18px"><span>Y</span></div>
<div class="c ctr" style="left:867px;top:249px;width:62px;height:18px;line-height:18px"><span>Y</span></div>
<div class="c ctr" style="left:930px;top:249px;width:64px;height:18px;line-height:18px"><span>Y</span></div>
<div class="c ctr" style="left:995px;top:249px;width:49px;height:18px;line-height:18px"><span>Y</span></div>
<div class="c ctr" style="left:1045px;top:249px;width:45px;height:18px;line-height:18px"><span>Y</span></div>
<div class="c ctr" style="left:1091px;top:249px;width:26px;height:18px;line-height:18px"></div>
<div class="c ctr" style="left:1118px;top:249px;width:26px;height:18px;line-height:18px"></div>
<div class="c ctr" style="left:1145px;top:249px;width:26px;height:18px;line-height:18px"><span>Y</span></div>
<div class="c ctr" style="left:1172px;top:249px;width:35px;height:18px;line-height:18px"><span>Y</span></div>
<div class="c ctr" style="left:1208px;top:249px;width:88px;height:18px;line-height:18px"><span>Y</span></div>
<div class="c l g" style="left:637px;top:268px;width:61px;height:18px;line-height:18px"><svg class="ic" style="left:1px;top:1px;width:16px"><use href="#i-group"/></svg><span>Users</span></div>
<div class="c ctr" style="left:717px;top:268px;width:42px;height:18px;line-height:18px"><span>Y</span></div>
<div class="c ctr" style="left:760px;top:268px;width:60px;height:18px;line-height:18px"><span>Y</span></div>
<div class="c ctr" style="left:821px;top:268px;width:45px;height:18px;line-height:18px"><span>Y</span></div>
<div class="c ctr" style="left:867px;top:268px;width:62px;height:18px;line-height:18px"><span>Y</span></div>
<div class="c ctr" style="left:930px;top:268px;width:64px;height:18px;line-height:18px"><span>Y</span></div>
<div class="c ctr" style="left:995px;top:268px;width:49px;height:18px;line-height:18px"></div>
<div class="c ctr" style="left:1045px;top:268px;width:45px;height:18px;line-height:18px"></div>
<div class="c ctr" style="left:1091px;top:268px;width:26px;height:18px;line-height:18px"></div>
<div class="c ctr" style="left:1118px;top:268px;width:26px;height:18px;line-height:18px"></div>
<div class="c ctr" style="left:1145px;top:268px;width:26px;height:18px;line-height:18px"><span>Y</span></div>
<div class="c ctr" style="left:1172px;top:268px;width:35px;height:18px;line-height:18px"><span>Y</span></div>
<div class="c ctr" style="left:1208px;top:268px;width:88px;height:18px;line-height:18px"></div>
<div class="c ctr" style="left:1px;top:287px;width:23px;height:37px;line-height:37px"><svg class="ic" style="left:3px;top:10px;width:16px"><use href="#i-user"/></svg></div>
<div class="c ctr" style="left:25px;top:287px;width:22px;height:37px;line-height:37px"><svg class="ic" style="left:1px;top:10px"><use href="#i-f"/></svg></div>
<div class="c l" style="left:48px;top:287px;width:165px;height:37px;line-height:37px"><span style="letter-spacing:-0.327px">Complains &amp; Resolutions</span></div>
<div class="c l" style="left:218px;top:287px;width:361px;height:37px;line-height:37px"><span style="letter-spacing:-0.146px">03. Vendors\John Doe, Inc\1005 - Wills\Complains &amp; Resolutions</span></div>
<div class="c ctr" style="left:584px;top:287px;width:52px;height:37px;line-height:37px"><span>Y</span></div>
<div class="c l g" style="left:637px;top:287px;width:61px;height:18px;line-height:18px"><svg class="ic" style="left:1px;top:1px;width:16px"><use href="#i-group"/></svg><span>Managers</span></div>
<div class="c ctr" style="left:717px;top:287px;width:42px;height:18px;line-height:18px"><span>Y</span></div>
<div class="c ctr" style="left:760px;top:287px;width:60px;height:18px;line-height:18px"><span>Y</span></div>
<div class="c ctr" style="left:821px;top:287px;width:45px;height:18px;line-height:18px"><span>Y</span></div>
<div class="c ctr" style="left:867px;top:287px;width:62px;height:18px;line-height:18px"><span>Y</span></div>
<div class="c ctr" style="left:930px;top:287px;width:64px;height:18px;line-height:18px"><span>Y</span></div>
<div class="c ctr" style="left:995px;top:287px;width:49px;height:18px;line-height:18px"><span>Y</span></div>
<div class="c ctr" style="left:1045px;top:287px;width:45px;height:18px;line-height:18px"><span>Y</span></div>
<div class="c ctr" style="left:1091px;top:287px;width:26px;height:18px;line-height:18px"></div>
<div class="c ctr" style="left:1118px;top:287px;width:26px;height:18px;line-height:18px"></div>
<div class="c ctr" style="left:1145px;top:287px;width:26px;height:18px;line-height:18px"><span>Y</span></div>
<div class="c ctr" style="left:1172px;top:287px;width:35px;height:18px;line-height:18px"><span>Y</span></div>
<div class="c ctr" style="left:1208px;top:287px;width:88px;height:18px;line-height:18px"><span>Y</span></div>
<div class="c l g" style="left:637px;top:306px;width:61px;height:18px;line-height:18px"><svg class="ic" style="left:1px;top:1px;width:16px"><use href="#i-group"/></svg><span>Users</span></div>
<div class="c ctr" style="left:717px;top:306px;width:42px;height:18px;line-height:18px"><span>Y</span></div>
<div class="c ctr" style="left:760px;top:306px;width:60px;height:18px;line-height:18px"><span>Y</span></div>
<div class="c ctr" style="left:821px;top:306px;width:45px;height:18px;line-height:18px"><span>Y</span></div>
<div class="c ctr" style="left:867px;top:306px;width:62px;height:18px;line-height:18px"><span>Y</span></div>
<div class="c ctr" style="left:930px;top:306px;width:64px;height:18px;line-height:18px"><span>Y</span></div>
<div class="c ctr" style="left:995px;top:306px;width:49px;height:18px;line-height:18px"></div>
<div class="c ctr" style="left:1045px;top:306px;width:45px;height:18px;line-height:18px"></div>
<div class="c ctr" style="left:1091px;top:306px;width:26px;height:18px;line-height:18px"></div>
<div class="c ctr" style="left:1118px;top:306px;width:26px;height:18px;line-height:18px"></div>
<div class="c ctr" style="left:1145px;top:306px;width:26px;height:18px;line-height:18px"><span>Y</span></div>
<div class="c ctr" style="left:1172px;top:306px;width:35px;height:18px;line-height:18px"><span>Y</span></div>
<div class="c ctr" style="left:1208px;top:306px;width:88px;height:18px;line-height:18px"></div>
<div class="c ctr" style="left:1px;top:325px;width:23px;height:37px;line-height:37px"><svg class="ic" style="left:3px;top:10px;width:16px"><use href="#i-user"/></svg></div>
<div class="c ctr" style="left:25px;top:325px;width:22px;height:37px;line-height:37px"><svg class="ic" style="left:1px;top:10px"><use href="#i-f"/></svg></div>
<div class="c l" style="left:48px;top:325px;width:165px;height:37px;line-height:37px"><span style="letter-spacing:-0.415px">Communications</span></div>
<div class="c l" style="left:218px;top:325px;width:361px;height:37px;line-height:37px"><span style="letter-spacing:-0.151px">05. Students\John Doe 2\Communications</span></div>
<div class="c ctr" style="left:584px;top:325px;width:52px;height:37px;line-height:37px"><span>Y</span></div>
<div class="c l g" style="left:637px;top:325px;width:61px;height:18px;line-height:18px"><svg class="ic" style="left:1px;top:1px;width:16px"><use href="#i-group"/></svg><span>Users</span></div>
<div class="c ctr" style="left:717px;top:325px;width:42px;height:18px;line-height:18px"><span>Y</span></div>
<div class="c ctr" style="left:760px;top:325px;width:60px;height:18px;line-height:18px"><span>Y</span></div>
<div class="c ctr" style="left:821px;top:325px;width:45px;height:18px;line-height:18px"><span>Y</span></div>
<div class="c ctr" style="left:867px;top:325px;width:62px;height:18px;line-height:18px"><span>Y</span></div>
<div class="c ctr" style="left:930px;top:325px;width:64px;height:18px;line-height:18px"><span>Y</span></div>
<div class="c ctr" style="left:995px;top:325px;width:49px;height:18px;line-height:18px"></div>
<div class="c ctr" style="left:1045px;top:325px;width:45px;height:18px;line-height:18px"></div>
<div class="c ctr" style="left:1091px;top:325px;width:26px;height:18px;line-height:18px"></div>
<div class="c ctr" style="left:1118px;top:325px;width:26px;height:18px;line-height:18px"></div>
<div class="c ctr" style="left:1145px;top:325px;width:26px;height:18px;line-height:18px"><span>Y</span></div>
<div class="c ctr" style="left:1172px;top:325px;width:35px;height:18px;line-height:18px"><span>Y</span></div>
<div class="c ctr" style="left:1208px;top:325px;width:88px;height:18px;line-height:18px"></div>
<div class="c l g" style="left:637px;top:344px;width:61px;height:18px;line-height:18px"><svg class="ic" style="left:1px;top:1px;width:16px"><use href="#i-group"/></svg><span>Managers</span></div>
<div class="c ctr" style="left:717px;top:344px;width:42px;height:18px;line-height:18px"><span>Y</span></div>
<div class="c ctr" style="left:760px;top:344px;width:60px;height:18px;line-height:18px"><span>Y</span></div>
<div class="c ctr" style="left:821px;top:344px;width:45px;height:18px;line-height:18px"><span>Y</span></div>
<div class="c ctr" style="left:867px;top:344px;width:62px;height:18px;line-height:18px"><span>Y</span></div>
<div class="c ctr" style="left:930px;top:344px;width:64px;height:18px;line-height:18px"><span>Y</span></div>
<div class="c ctr" style="left:995px;top:344px;width:49px;height:18px;line-height:18px"><span>Y</span></div>
<div class="c ctr" style="left:1045px;top:344px;width:45px;height:18px;line-height:18px"><span>Y</span></div>
<div class="c ctr" style="left:1091px;top:344px;width:26px;height:18px;line-height:18px"></div>
<div class="c ctr" style="left:1118px;top:344px;width:26px;height:18px;line-height:18px"></div>
<div class="c ctr" style="left:1145px;top:344px;width:26px;height:18px;line-height:18px"><span>Y</span></div>
<div class="c ctr" style="left:1172px;top:344px;width:35px;height:18px;line-height:18px"><span>Y</span></div>
<div class="c ctr" style="left:1208px;top:344px;width:88px;height:18px;line-height:18px"><span>Y</span></div>
<div class="c ctr" style="left:1px;top:363px;width:23px;height:18px;line-height:18px"><svg class="ic" style="left:3px;top:1px;width:16px"><use href="#i-user"/></svg></div>
<div class="c ctr" style="left:25px;top:363px;width:22px;height:18px;line-height:18px"><svg class="ic" style="left:1px;top:1px"><use href="#i-fd"/></svg></div>
<div class="c l" style="left:48px;top:363px;width:165px;height:18px;line-height:18px"><span style="letter-spacing:0.046px">Attorney Notes</span></div>
<div class="c l" style="left:218px;top:363px;width:361px;height:18px;line-height:18px"><span style="letter-spacing:-0.038px">02. Customers\A Benton John B Jr\22022 - Copyrights\Attorney Notes</span></div>
<div class="c ctr" style="left:584px;top:363px;width:52px;height:18px;line-height:18px"><span>Y</span></div>
<div class="c l g" style="left:637px;top:363px;width:61px;height:18px;line-height:18px"><svg class="ic" style="left:1px;top:1px;width:16px"><use href="#i-group"/></svg><span>Users</span></div>
<div class="c ctr" style="left:717px;top:363px;width:42px;height:18px;line-height:18px"><span>Y</span></div>
<div class="c ctr" style="left:760px;top:363px;width:60px;height:18px;line-height:18px"><span>Y</span></div>
<div class="c ctr" style="left:821px;top:363px;width:45px;height:18px;line-height:18px"><span>Y</span></div>
<div class="c ctr" style="left:867px;top:363px;width:62px;height:18px;line-height:18px"><span>Y</span></div>
<div class="c ctr" style="left:930px;top:363px;width:64px;height:18px;line-height:18px"><span>Y</span></div>
<div class="c ctr" style="left:995px;top:363px;width:49px;height:18px;line-height:18px"></div>
<div class="c ctr" style="left:1045px;top:363px;width:45px;height:18px;line-height:18px"></div>
<div class="c ctr" style="left:1091px;top:363px;width:26px;height:18px;line-height:18px"></div>
<div class="c ctr" style="left:1118px;top:363px;width:26px;height:18px;line-height:18px"></div>
<div class="c ctr" style="left:1145px;top:363px;width:26px;height:18px;line-height:18px"><span>Y</span></div>
<div class="c ctr" style="left:1172px;top:363px;width:35px;height:18px;line-height:18px"><span>Y</span></div>
<div class="c ctr" style="left:1208px;top:363px;width:88px;height:18px;line-height:18px"></div>
<div class="c ctr" style="left:1px;top:382px;width:23px;height:37px;line-height:37px"><svg class="ic" style="left:3px;top:10px;width:16px"><use href="#i-user"/></svg></div>
<div class="c ctr" style="left:25px;top:382px;width:22px;height:37px;line-height:37px"><svg class="ic" style="left:1px;top:10px"><use href="#i-f"/></svg></div>
<div class="c l" style="left:48px;top:382px;width:165px;height:37px;line-height:37px"><span style="letter-spacing:-0.100px">Agreements &amp; Contracts</span></div>
<div class="c l" style="left:218px;top:382px;width:361px;height:37px;line-height:37px"><span style="letter-spacing:-0.062px">03. Vendors\John Doe, Inc\1005 - Wills\Agreements &amp; Contracts</span></div>
<div class="c ctr" style="left:584px;top:382px;width:52px;height:37px;line-height:37px"><span>Y</span></div>
<div class="c l g" style="left:637px;top:382px;width:61px;height:18px;line-height:18px"><svg class="ic" style="left:1px;top:1px;width:16px"><use href="#i-group"/></svg><span>Managers</span></div>
<div class="c ctr" style="left:717px;top:382px;width:42px;height:18px;line-height:18px"><span>Y</span></div>
<div class="c ctr" style="left:760px;top:382px;width:60px;height:18px;line-height:18px"><span>Y</span></div>
<div class="c ctr" style="left:821px;top:382px;width:45px;height:18px;line-height:18px"><span>Y</span></div>
<div class="c ctr" style="left:867px;top:382px;width:62px;height:18px;line-height:18px"><span>Y</span></div>
<div class="c ctr" style="left:930px;top:382px;width:64px;height:18px;line-height:18px"><span>Y</span></div>
<div class="c ctr" style="left:995px;top:382px;width:49px;height:18px;line-height:18px"><span>Y</span></div>
<div class="c ctr" style="left:1045px;top:382px;width:45px;height:18px;line-height:18px"><span>Y</span></div>
<div class="c ctr" style="left:1091px;top:382px;width:26px;height:18px;line-height:18px"></div>
<div class="c ctr" style="left:1118px;top:382px;width:26px;height:18px;line-height:18px"></div>
<div class="c ctr" style="left:1145px;top:382px;width:26px;height:18px;line-height:18px"><span>Y</span></div>
<div class="c ctr" style="left:1172px;top:382px;width:35px;height:18px;line-height:18px"><span>Y</span></div>
<div class="c ctr" style="left:1208px;top:382px;width:88px;height:18px;line-height:18px"><span>Y</span></div>
<div class="c l g" style="left:637px;top:401px;width:61px;height:18px;line-height:18px"><svg class="ic" style="left:1px;top:1px;width:16px"><use href="#i-group"/></svg><span>Users</span></div>
<div class="c ctr" style="left:717px;top:401px;width:42px;height:18px;line-height:18px"><span>Y</span></div>
<div class="c ctr" style="left:760px;top:401px;width:60px;height:18px;line-height:18px"><span>Y</span></div>
<div class="c ctr" style="left:821px;top:401px;width:45px;height:18px;line-height:18px"><span>Y</span></div>
<div class="c ctr" style="left:867px;top:401px;width:62px;height:18px;line-height:18px"><span>Y</span></div>
<div class="c ctr" style="left:930px;top:401px;width:64px;height:18px;line-height:18px"><span>Y</span></div>
<div class="c ctr" style="left:995px;top:401px;width:49px;height:18px;line-height:18px"></div>
<div class="c ctr" style="left:1045px;top:401px;width:45px;height:18px;line-height:18px"></div>
<div class="c ctr" style="left:1091px;top:401px;width:26px;height:18px;line-height:18px"></div>
<div class="c ctr" style="left:1118px;top:401px;width:26px;height:18px;line-height:18px"></div>
<div class="c ctr" style="left:1145px;top:401px;width:26px;height:18px;line-height:18px"><span>Y</span></div>
<div class="c ctr" style="left:1172px;top:401px;width:35px;height:18px;line-height:18px"><span>Y</span></div>
<div class="c ctr" style="left:1208px;top:401px;width:88px;height:18px;line-height:18px"></div>
<div class="c ctr" style="left:1px;top:420px;width:23px;height:37px;line-height:37px"><svg class="ic" style="left:3px;top:10px;width:16px"><use href="#i-user"/></svg></div>
<div class="c ctr" style="left:25px;top:420px;width:22px;height:37px;line-height:37px"><svg class="ic" style="left:1px;top:10px"><use href="#i-f"/></svg></div>
<div class="c l" style="left:48px;top:420px;width:165px;height:37px;line-height:37px"><span style="letter-spacing:-0.100px">Agreements &amp; Contracts</span></div>
<div class="c l" style="left:218px;top:420px;width:361px;height:37px;line-height:37px"><span style="letter-spacing:-0.028px">03. Vendors\xyz Radio\1002 - Insurance\Agreements &amp; Contracts</span></div>
<div class="c ctr" style="left:584px;top:420px;width:52px;height:37px;line-height:37px"><span>Y</span></div>
<div class="c l g" style="left:637px;top:420px;width:61px;height:18px;line-height:18px"><svg class="ic" style="left:1px;top:1px;width:16px"><use href="#i-group"/></svg><span>Managers</span></div>
<div class="c ctr" style="left:717px;top:420px;width:42px;height:18px;line-height:18px"><span>Y</span></div>
<div class="c ctr" style="left:760px;top:420px;width:60px;height:18px;line-height:18px"><span>Y</span></div>
<div class="c ctr" style="left:821px;top:420px;width:45px;height:18px;line-height:18px"><span>Y</span></div>
<div class="c ctr" style="left:867px;top:420px;width:62px;height:18px;line-height:18px"><span>Y</span></div>
<div class="c ctr" style="left:930px;top:420px;width:64px;height:18px;line-height:18px"><span>Y</span></div>
<div class="c ctr" style="left:995px;top:420px;width:49px;height:18px;line-height:18px"><span>Y</span></div>
<div class="c ctr" style="left:1045px;top:420px;width:45px;height:18px;line-height:18px"><span>Y</span></div>
<div class="c ctr" style="left:1091px;top:420px;width:26px;height:18px;line-height:18px"></div>
<div class="c ctr" style="left:1118px;top:420px;width:26px;height:18px;line-height:18px"></div>
<div class="c ctr" style="left:1145px;top:420px;width:26px;height:18px;line-height:18px"><span>Y</span></div>
<div class="c ctr" style="left:1172px;top:420px;width:35px;height:18px;line-height:18px"><span>Y</span></div>
<div class="c ctr" style="left:1208px;top:420px;width:88px;height:18px;line-height:18px"><span>Y</span></div>
<div class="c l g" style="left:637px;top:439px;width:61px;height:18px;line-height:18px"><svg class="ic" style="left:1px;top:1px;width:16px"><use href="#i-group"/></svg><span>Users</span></div>
<div class="c ctr" style="left:717px;top:439px;width:42px;height:18px;line-height:18px"><span>Y</span></div>
<div class="c ctr" style="left:760px;top:439px;width:60px;height:18px;line-height:18px"><span>Y</span></div>
<div class="c ctr" style="left:821px;top:439px;width:45px;height:18px;line-height:18px"><span>Y</span></div>
<div class="c ctr" style="left:867px;top:439px;width:62px;height:18px;line-height:18px"><span>Y</span></div>
<div class="c ctr" style="left:930px;top:439px;width:64px;height:18px;line-height:18px"><span>Y</span></div>
<div class="c ctr" style="left:995px;top:439px;width:49px;height:18px;line-height:18px"></div>
<div class="c ctr" style="left:1045px;top:439px;width:45px;height:18px;line-height:18px"></div>
<div class="c ctr" style="left:1091px;top:439px;width:26px;height:18px;line-height:18px"></div>
<div class="c ctr" style="left:1118px;top:439px;width:26px;height:18px;line-height:18px"></div>
<div class="c ctr" style="left:1145px;top:439px;width:26px;height:18px;line-height:18px"><span>Y</span></div>
<div class="c ctr" style="left:1172px;top:439px;width:35px;height:18px;line-height:18px"><span>Y</span></div>
<div class="c ctr" style="left:1208px;top:439px;width:88px;height:18px;line-height:18px"></div>
<div class="c ctr" style="left:1px;top:458px;width:23px;height:18px;line-height:18px"><svg class="ic" style="left:3px;top:1px;width:16px"><use href="#i-user"/></svg></div>
<div class="c ctr" style="left:25px;top:458px;width:22px;height:18px;line-height:18px"><svg class="ic" style="left:1px;top:1px"><use href="#i-fc"/></svg></div>
<div class="c l" style="left:48px;top:458px;width:165px;height:18px;line-height:18px"><span style="letter-spacing:-0.189px">Agreements</span></div>
<div class="c l" style="left:218px;top:458px;width:361px;height:18px;line-height:18px"><span style="letter-spacing:-0.079px">02. Customers\A Benton John B Jr\22022 - Copyrights\Agreements</span></div>
<div class="c ctr" style="left:584px;top:458px;width:52px;height:18px;line-height:18px"><span>Y</span></div>
<div class="c l g" style="left:637px;top:458px;width:61px;height:18px;line-height:18px"><svg class="ic" style="left:1px;top:1px;width:16px"><use href="#i-group"/></svg><span>Users</span></div>
<div class="c ctr" style="left:717px;top:458px;width:42px;height:18px;line-height:18px"><span>Y</span></div>
<div class="c ctr" style="left:760px;top:458px;width:60px;height:18px;line-height:18px"><span>Y</span></div>
<div class="c ctr" style="left:821px;top:458px;width:45px;height:18px;line-height:18px"><span>Y</span></div>
<div class="c ctr" style="left:867px;top:458px;width:62px;height:18px;line-height:18px"><span>Y</span></div>
<div class="c ctr" style="left:930px;top:458px;width:64px;height:18px;line-height:18px"><span>Y</span></div>
<div class="c ctr" style="left:995px;top:458px;width:49px;height:18px;line-height:18px"></div>
<div class="c ctr" style="left:1045px;top:458px;width:45px;height:18px;line-height:18px"></div>
<div class="c ctr" style="left:1091px;top:458px;width:26px;height:18px;line-height:18px"></div>
<div class="c ctr" style="left:1118px;top:458px;width:26px;height:18px;line-height:18px"></div>
<div class="c ctr" style="left:1145px;top:458px;width:26px;height:18px;line-height:18px"><span>Y</span></div>
<div class="c ctr" style="left:1172px;top:458px;width:35px;height:18px;line-height:18px"><span>Y</span></div>
<div class="c ctr" style="left:1208px;top:458px;width:88px;height:18px;line-height:18px"></div>
<div class="c ctr" style="left:1px;top:477px;width:23px;height:18px;line-height:18px"><svg class="ic" style="left:3px;top:1px;width:16px"><use href="#i-user"/></svg></div>
<div class="c ctr" style="left:25px;top:477px;width:22px;height:18px;line-height:18px"><svg class="ic" style="left:1px;top:1px"><use href="#i-b"/></svg></div>
<div class="c l" style="left:48px;top:477px;width:165px;height:18px;line-height:18px"><span style="letter-spacing:-0.100px">22022 - Copyrights</span></div>
<div class="c l" style="left:218px;top:477px;width:361px;height:18px;line-height:18px"><span style="letter-spacing:-0.076px">02. Customers\A Benton John B Jr\22022 - Copyrights</span></div>
<div class="c ctr" style="left:584px;top:477px;width:52px;height:18px;line-height:18px"><span>Y</span></div>
<div class="c l g" style="left:637px;top:477px;width:61px;height:18px;line-height:18px"><svg class="ic" style="left:1px;top:1px;width:16px"><use href="#i-group"/></svg><span>Users</span></div>
<div class="c ctr" style="left:717px;top:477px;width:42px;height:18px;line-height:18px"><span>Y</span></div>
<div class="c ctr" style="left:760px;top:477px;width:60px;height:18px;line-height:18px"><span>Y</span></div>
<div class="c ctr" style="left:821px;top:477px;width:45px;height:18px;line-height:18px"><span>Y</span></div>
<div class="c ctr" style="left:867px;top:477px;width:62px;height:18px;line-height:18px"><span>Y</span></div>
<div class="c ctr" style="left:930px;top:477px;width:64px;height:18px;line-height:18px"><span>Y</span></div>
<div class="c ctr" style="left:995px;top:477px;width:49px;height:18px;line-height:18px"></div>
<div class="c ctr" style="left:1045px;top:477px;width:45px;height:18px;line-height:18px"></div>
<div class="c ctr" style="left:1091px;top:477px;width:26px;height:18px;line-height:18px"></div>
<div class="c ctr" style="left:1118px;top:477px;width:26px;height:18px;line-height:18px"></div>
<div class="c ctr" style="left:1145px;top:477px;width:26px;height:18px;line-height:18px"><span>Y</span></div>
<div class="c ctr" style="left:1172px;top:477px;width:35px;height:18px;line-height:18px"><span>Y</span></div>
<div class="c ctr" style="left:1208px;top:477px;width:88px;height:18px;line-height:18px"></div>
<div class="c ctr" style="left:1px;top:496px;width:23px;height:37px;line-height:37px"><svg class="ic" style="left:3px;top:10px;width:16px"><use href="#i-user"/></svg></div>
<div class="c ctr" style="left:25px;top:496px;width:22px;height:37px;line-height:37px"><svg class="ic" style="left:1px;top:10px"><use href="#i-fb"/></svg></div>
<div class="c l" style="left:48px;top:496px;width:165px;height:37px;line-height:37px"><span style="letter-spacing:-0.264px">1005 - Wills</span></div>
<div class="c l" style="left:218px;top:496px;width:361px;height:37px;line-height:37px"><span style="letter-spacing:-0.065px">03. Vendors\John Doe, Inc\1005 - Wills</span></div>
<div class="c ctr" style="left:584px;top:496px;width:52px;height:37px;line-height:37px"><span>Y</span></div>
<div class="c l g" style="left:637px;top:496px;width:61px;height:18px;line-height:18px"><svg class="ic" style="left:1px;top:1px;width:16px"><use href="#i-group"/></svg><span>Managers</span></div>
<div class="c ctr" style="left:717px;top:496px;width:42px;height:18px;line-height:18px"><span>Y</span></div>
<div class="c ctr" style="left:760px;top:496px;width:60px;height:18px;line-height:18px"><span>Y</span></div>
<div class="c ctr" style="left:821px;top:496px;width:45px;height:18px;line-height:18px"><span>Y</span></div>
<div class="c ctr" style="left:867px;top:496px;width:62px;height:18px;line-height:18px"><span>Y</span></div>
<div class="c ctr" style="left:930px;top:496px;width:64px;height:18px;line-height:18px"><span>Y</span></div>
<div class="c ctr" style="left:995px;top:496px;width:49px;height:18px;line-height:18px"><span>Y</span></div>
<div class="c ctr" style="left:1045px;top:496px;width:45px;height:18px;line-height:18px"><span>Y</span></div>
<div class="c ctr" style="left:1091px;top:496px;width:26px;height:18px;line-height:18px"></div>
<div class="c ctr" style="left:1118px;top:496px;width:26px;height:18px;line-height:18px"></div>
<div class="c ctr" style="left:1145px;top:496px;width:26px;height:18px;line-height:18px"><span>Y</span></div>
<div class="c ctr" style="left:1172px;top:496px;width:35px;height:18px;line-height:18px"><span>Y</span></div>
<div class="c ctr" style="left:1208px;top:496px;width:88px;height:18px;line-height:18px"><span>Y</span></div>
<div class="c l g" style="left:637px;top:515px;width:61px;height:18px;line-height:18px"><svg class="ic" style="left:1px;top:1px;width:16px"><use href="#i-group"/></svg><span>Users</span></div>
<div class="c ctr" style="left:717px;top:515px;width:42px;height:18px;line-height:18px"><span>Y</span></div>
<div class="c ctr" style="left:760px;top:515px;width:60px;height:18px;line-height:18px"><span>Y</span></div>
<div class="c ctr" style="left:821px;top:515px;width:45px;height:18px;line-height:18px"><span>Y</span></div>
<div class="c ctr" style="left:867px;top:515px;width:62px;height:18px;line-height:18px"><span>Y</span></div>
<div class="c ctr" style="left:930px;top:515px;width:64px;height:18px;line-height:18px"><span>Y</span></div>
<div class="c ctr" style="left:995px;top:515px;width:49px;height:18px;line-height:18px"></div>
<div class="c ctr" style="left:1045px;top:515px;width:45px;height:18px;line-height:18px"></div>
<div class="c ctr" style="left:1091px;top:515px;width:26px;height:18px;line-height:18px"></div>
<div class="c ctr" style="left:1118px;top:515px;width:26px;height:18px;line-height:18px"></div>
<div class="c ctr" style="left:1145px;top:515px;width:26px;height:18px;line-height:18px"><span>Y</span></div>
<div class="c ctr" style="left:1172px;top:515px;width:35px;height:18px;line-height:18px"><span>Y</span></div>
<div class="c ctr" style="left:1208px;top:515px;width:88px;height:18px;line-height:18px"></div>
<div class="c ctr" style="left:1px;top:534px;width:23px;height:37px;line-height:37px"><svg class="ic" style="left:3px;top:10px;width:16px"><use href="#i-user"/></svg></div>
<div class="c ctr" style="left:25px;top:534px;width:22px;height:37px;line-height:37px"><svg class="ic" style="left:1px;top:10px"><use href="#i-fb"/></svg></div>
<div class="c l" style="left:48px;top:534px;width:165px;height:37px;line-height:37px"><span style="letter-spacing:-0.113px">1002 - Insurance</span></div>
<div class="c l" style="left:218px;top:534px;width:361px;height:37px;line-height:37px"><span style="letter-spacing:-0.019px">03. Vendors\xyz Radio\1002 - Insurance</span></div>
<div class="c ctr" style="left:584px;top:534px;width:52px;height:37px;line-height:37px"><span>Y</span></div>
<div class="c l g" style="left:637px;top:534px;width:61px;height:18px;line-height:18px"><svg class="ic" style="left:1px;top:1px;width:16px"><use href="#i-group"/></svg><span>Managers</span></div>
<div class="c ctr" style="left:717px;top:534px;width:42px;height:18px;line-height:18px"><span>Y</span></div>
<div class="c ctr" style="left:760px;top:534px;width:60px;height:18px;line-height:18px"><span>Y</span></div>
<div class="c ctr" style="left:821px;top:534px;width:45px;height:18px;line-height:18px"><span>Y</span></div>
<div class="c ctr" style="left:867px;top:534px;width:62px;height:18px;line-height:18px"><span>Y</span></div>
<div class="c ctr" style="left:930px;top:534px;width:64px;height:18px;line-height:18px"><span>Y</span></div>
<div class="c ctr" style="left:995px;top:534px;width:49px;height:18px;line-height:18px"><span>Y</span></div>
<div class="c ctr" style="left:1045px;top:534px;width:45px;height:18px;line-height:18px"><span>Y</span></div>
<div class="c ctr" style="left:1091px;top:534px;width:26px;height:18px;line-height:18px"></div>
<div class="c ctr" style="left:1118px;top:534px;width:26px;height:18px;line-height:18px"></div>
<div class="c ctr" style="left:1145px;top:534px;width:26px;height:18px;line-height:18px"><span>Y</span></div>
<div class="c ctr" style="left:1172px;top:534px;width:35px;height:18px;line-height:18px"><span>Y</span></div>
<div class="c ctr" style="left:1208px;top:534px;width:88px;height:18px;line-height:18px"><span>Y</span></div>
<div class="c l g" style="left:637px;top:553px;width:61px;height:18px;line-height:18px"><svg class="ic" style="left:1px;top:1px;width:16px"><use href="#i-group"/></svg><span>Users</span></div>
<div class="c ctr" style="left:717px;top:553px;width:42px;height:18px;line-height:18px"><span>Y</span></div>
<div class="c ctr" style="left:760px;top:553px;width:60px;height:18px;line-height:18px"><span>Y</span></div>
<div class="c ctr" style="left:821px;top:553px;width:45px;height:18px;line-height:18px"><span>Y</span></div>
<div class="c ctr" style="left:867px;top:553px;width:62px;height:18px;line-height:18px"><span>Y</span></div>
<div class="c ctr" style="left:930px;top:553px;width:64px;height:18px;line-height:18px"><span>Y</span></div>
<div class="c ctr" style="left:995px;top:553px;width:49px;height:18px;line-height:18px"></div>
<div class="c ctr" style="left:1045px;top:553px;width:45px;height:18px;line-height:18px"></div>
<div class="c ctr" style="left:1091px;top:553px;width:26px;height:18px;line-height:18px"></div>
<div class="c ctr" style="left:1118px;top:553px;width:26px;height:18px;line-height:18px"></div>
<div class="c ctr" style="left:1145px;top:553px;width:26px;height:18px;line-height:18px"><span>Y</span></div>
<div class="c ctr" style="left:1172px;top:553px;width:35px;height:18px;line-height:18px"><span>Y</span></div>
<div class="c ctr" style="left:1208px;top:553px;width:88px;height:18px;line-height:18px"></div>
<div class="c ctr" style="left:1px;top:572px;width:23px;height:37px;line-height:37px"><svg class="ic" style="left:3px;top:10px;width:16px"><use href="#i-user"/></svg></div>
<div class="c ctr" style="left:25px;top:572px;width:22px;height:37px;line-height:37px"><svg class="ic" style="left:1px;top:10px"><use href="#i-f"/></svg></div>
<div class="c l" style="left:48px;top:572px;width:165px;height:37px;line-height:37px"><span style="letter-spacing:-0.363px">04. Scans</span></div>
<div class="c l" style="left:218px;top:572px;width:361px;height:37px;line-height:37px"><span style="letter-spacing:0.010px">01. Internal\04. Scans</span></div>
<div class="c ctr" style="left:584px;top:572px;width:52px;height:37px;line-height:37px"><span>Y</span></div>
<div class="c l g" style="left:637px;top:572px;width:61px;height:18px;line-height:18px"><svg class="ic" style="left:1px;top:1px;width:16px"><use href="#i-group"/></svg><span>Users</span></div>
<div class="c ctr" style="left:717px;top:572px;width:42px;height:18px;line-height:18px"><span>Y</span></div>
<div class="c ctr" style="left:760px;top:572px;width:60px;height:18px;line-height:18px"><span>Y</span></div>
<div class="c ctr" style="left:821px;top:572px;width:45px;height:18px;line-height:18px"><span>Y</span></div>
<div class="c ctr" style="left:867px;top:572px;width:62px;height:18px;line-height:18px"><span>Y</span></div>
<div class="c ctr" style="left:930px;top:572px;width:64px;height:18px;line-height:18px"><span>Y</span></div>
<div class="c ctr" style="left:995px;top:572px;width:49px;height:18px;line-height:18px"></div>
<div class="c ctr" style="left:1045px;top:572px;width:45px;height:18px;line-height:18px"></div>
<div class="c ctr" style="left:1091px;top:572px;width:26px;height:18px;line-height:18px"></div>
<div class="c ctr" style="left:1118px;top:572px;width:26px;height:18px;line-height:18px"></div>
<div class="c ctr" style="left:1145px;top:572px;width:26px;height:18px;line-height:18px"><span>Y</span></div>
<div class="c ctr" style="left:1172px;top:572px;width:35px;height:18px;line-height:18px"><span>Y</span></div>
<div class="c ctr" style="left:1208px;top:572px;width:88px;height:18px;line-height:18px"></div>
<div class="c l g" style="left:637px;top:591px;width:61px;height:18px;line-height:18px"><svg class="ic" style="left:1px;top:1px;width:16px"><use href="#i-group"/></svg><span>Managers</span></div>
<div class="c ctr" style="left:717px;top:591px;width:42px;height:18px;line-height:18px"><span>Y</span></div>
<div class="c ctr" style="left:760px;top:591px;width:60px;height:18px;line-height:18px"><span>Y</span></div>
<div class="c ctr" style="left:821px;top:591px;width:45px;height:18px;line-height:18px"><span>Y</span></div>
<div class="c ctr" style="left:867px;top:591px;width:62px;height:18px;line-height:18px"><span>Y</span></div>
<div class="c ctr" style="left:930px;top:591px;width:64px;height:18px;line-height:18px"><span>Y</span></div>
<div class="c ctr" style="left:995px;top:591px;width:49px;height:18px;line-height:18px"><span>Y</span></div>
<div class="c ctr" style="left:1045px;top:591px;width:45px;height:18px;line-height:18px"><span>Y</span></div>
<div class="c ctr" style="left:1091px;top:591px;width:26px;height:18px;line-height:18px"></div>
<div class="c ctr" style="left:1118px;top:591px;width:26px;height:18px;line-height:18px"></div>
<div class="c ctr" style="left:1145px;top:591px;width:26px;height:18px;line-height:18px"><span>Y</span></div>
<div class="c ctr" style="left:1172px;top:591px;width:35px;height:18px;line-height:18px"><span>Y</span></div>
<div class="c ctr" style="left:1208px;top:591px;width:88px;height:18px;line-height:18px"><span>Y</span></div>
<div class="abs" style="left:1296px;top:21px;width:17px;height:579px;background:linear-gradient(90deg,#f1f1f5,#f8f8fa)"></div>
<i class="abs" style="left:1300px;top:26px;border-left:4px solid transparent;border-right:4px solid transparent;border-bottom:4px solid #8c8c9a"></i>
<i class="abs" style="left:1300px;top:590px;border-left:4px solid transparent;border-right:4px solid transparent;border-top:4px solid #8c8c9a"></i>
<i class="abs" style="left:1301px;top:55px;width:6px;height:16px;border:1px solid #a9a9b6;border-radius:3.500px;background:linear-gradient(90deg,#e4e4ea,#d4d4dc)"></i>

</div>
<div class="abs" style="left:5px;top:746px;width:1314px;height:2px;background:linear-gradient(#b7b7c1,#c6c6ce)"></div>
<div id="status" class="abs" style="left:5px;top:748px;width:1314px;height:24px;background:linear-gradient(#d9d9de,#d0d0d6 50%,#c7c7ce);border-bottom:1px solid #a9a9b5"><span class="abs" style="left:9px;top:6px">Files: 1016</span><i class="abs sep" style="left:98px"></i><span class="abs" style="left:109px;top:6px">Folders: 1374</span><i class="abs sep" style="left:198px"></i></div>
<div class="abs" style="left:5px;top:27px;width:1px;height:721px;background:rgba(168,168,180,0.5)"></div>
<div class="abs" style="left:5px;top:144px;width:1314px;height:2px;background:linear-gradient(#b6b6c2,#c2c2cc)"></div>
<div class="abs" style="left:1319px;top:27px;width:1px;height:745px;background:rgba(168,168,180,0.7)"></div>
<div id="menu" class="abs" style="left:75px;top:141px;width:103px;height:148px;background:#fff;border:1px solid #b4b4c0">
<div class="abs" style="left:2px;top:74px;width:97px;height:22px;border:1px solid #b3c3ee;border-radius:2px;background:linear-gradient(#e4ebff,#d2ddfb)"></div>
<span class="mi" style="top:1px"><svg class="abs" style="left:8px;top:5px" width="12" height="14" viewBox="0 0 12 14"><path d="M4 1h6.500L8.500 7C7.800 9.500 6 11.500 3 12.500l-.5-1.500C4.500 10 5.500 8.500 5.700 7H3z" fill="#666"/></svg><b>CSV</b></span>
<span class="mi" style="top:25px"><svg class="abs" style="left:6px;top:5px" width="14" height="14" viewBox="0 0 14 14"><path d="M1.500 13L12.500 1M3.500 1l6.500 12" stroke="#6a6a6a" stroke-width="2.400" fill="none"/></svg><b>XLS</b></span>
<span class="mi" style="top:49px"><svg class="abs" style="left:6px;top:5px" width="14" height="14" viewBox="0 0 14 14"><path d="M1.500 13L12.500 1M3.500 1l6.500 12" stroke="#6a6a6a" stroke-width="2.400" fill="none"/><path d="M1 13.500h6" stroke="#666" stroke-width="1"/></svg><b>XLSX</b></span>
<span class="mi" style="top:73px"><em>PDF</em><b>PDF</b></span>
<span class="mi" style="top:97px"><svg class="abs" style="left:5px;top:8px" width="17" height="10" viewBox="0 0 17 10"><path d="M6.500 1.500L1.500 5l5 3.500M10.500 1.500l5 3.500-5 3.500" stroke="#5a5a5a" stroke-width="1.700" fill="none"/></svg><b>XML</b></span>
<span class="mi" style="top:121px"><svg class="abs" style="left:7px;top:4px" width="13" height="16" viewBox="0 0 13 16"><rect x="0.500" y="0.500" width="12" height="15" fill="#d8d8d8" stroke="#8a8a8a"/><rect x="2.500" y="2.500" width="8" height="3" fill="#666"/><path d="M2.500 8h8M2.500 10.500h8M2.500 13h8" stroke="#777" stroke-width="1.200" stroke-dasharray="2 1"/></svg><b>REPORT</b></span>
</div>
</body></html>
